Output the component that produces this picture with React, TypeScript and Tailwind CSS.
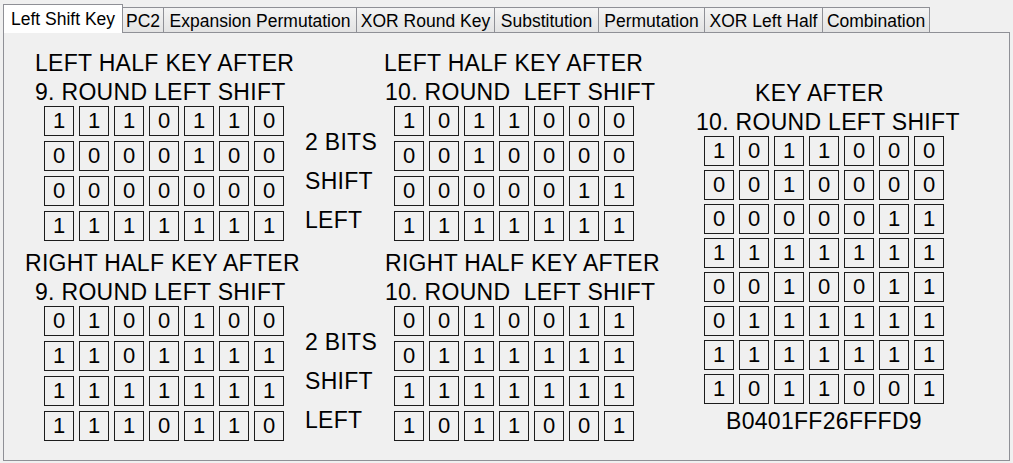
const tabs = [
  { label: 'Left Shift Key', w: 'w-[120px]', active: true },
  { label: 'PC2', w: 'w-[42px]' },
  { label: 'Expansion Permutation', w: 'w-[194px]' },
  { label: 'XOR Round Key', w: 'w-[139px]' },
  { label: 'Substitution', w: 'w-[105px]' },
  { label: 'Permutation', w: 'w-[107px]' },
  { label: 'XOR Left Half', w: 'w-[119px]' },
  { label: 'Combination', w: 'w-[108px]' },
];

const leftTop = ['1110110', '0000100', '0000000', '1111111'];
const midTop = ['1011000', '0010000', '0000011', '1111111'];
const leftBottom = ['0100100', '1101111', '1111111', '1110110'];
const midBottom = ['0010011', '0111111', '1111111', '1011001'];
const combined = [...midTop, ...midBottom];

const Grid = ({ rows, tight = false }: { rows: string[]; tight?: boolean }) => (
  <div className={tight ? 'flex flex-col gap-[4px]' : 'flex flex-col gap-[5px]'}>
    {rows.map((row, r) => (
      <div key={r} className="flex gap-[5px]">
        {row.split('').map((bit, c) => (
          <div
            key={c}
            className="w-[30px] h-[30px] border border-[#1c1c1c] flex items-center justify-center text-[22px] tracking-normal leading-none"
          >
            {bit}
          </div>
        ))}
      </div>
    ))}
  </div>
);

const ShiftLabels = () => (
  <div className="w-[79px] mt-[74px] flex flex-col leading-[39px]">
    <span>2 BITS</span>
    <span>SHIFT</span>
    <span>LEFT</span>
  </div>
);

const Block = ({ title, second, rows, titlePad, secondPad, gridPad, w }: {
  title: string; second: string; rows: string[];
  titlePad: string; secondPad: string; gridPad: string; w: string;
}) => (
  <div className={`${w} flex flex-col`}>
    <div className={`${titlePad} leading-[29px] whitespace-pre`}>{title}</div>
    <div className={`${secondPad} leading-[28px] whitespace-pre`}>{second}</div>
    <div className={gridPad}>
      <Grid rows={rows} />
    </div>
  </div>
);

export default function App() {
  return (
    <div
      className="w-[1013px] h-[463px] bg-[#f0f0f0] overflow-hidden text-black"
      style={{ fontFamily: '"Liberation Sans", Arial, sans-serif' }}
    >
      <div className="flex items-end h-[32px] pl-[3px] text-[17.5px] leading-[20px]">
        {tabs.map((t, i) => (
          <div
            key={t.label}
            className={
              t.active
                ? `${t.w} h-[29px] -mb-px relative z-10 bg-white border border-b-0 border-[#8f9096] flex justify-center pt-[4px]`
                : `${t.w} h-[25px] ${i > 0 ? '-ml-px' : ''} bg-linear-to-b from-[#f4f4f4] to-[#e3e3e3] border border-b-0 border-[#8f9096] flex justify-center pt-[3px]`
            }
          >
            {t.label}
          </div>
        ))}
      </div>

      <div className="ml-[3px] w-[1007px] h-[429px] border border-[#8f9096] bg-[#f0f0f0] flex text-[23px] tracking-[0.3px]">
        <div className="flex flex-col pt-[16px]">
          <div className="flex">
            <Block
              w="w-[301px]"
              title="LEFT HALF KEY AFTER"
              second="9. ROUND LEFT SHIFT"
              rows={leftTop}
              titlePad="pl-[31px]"
              secondPad="pl-[31px]"
              gridPad="pl-[40px]"
            />
            <ShiftLabels />
            <Block
              w="w-[306px]"
              title="LEFT HALF KEY AFTER"
              second="10. ROUND  LEFT SHIFT"
              rows={midTop}
              titlePad="pl-0"
              secondPad="pl-[1px]"
              gridPad="pl-[10px]"
            />
          </div>
          <div className="flex mt-[8px]">
            <Block
              w="w-[301px]"
              title="RIGHT HALF KEY AFTER"
              second="9. ROUND LEFT SHIFT"
              rows={leftBottom}
              titlePad="pl-[21px]"
              secondPad="pl-[31px]"
              gridPad="pl-[40px]"
            />
            <ShiftLabels />
            <Block
              w="w-[306px]"
              title="RIGHT HALF KEY AFTER"
              second="10. ROUND  LEFT SHIFT"
              rows={midBottom}
              titlePad="pl-[1px]"
              secondPad="pl-[1px]"
              gridPad="pl-[10px]"
            />
          </div>
        </div>

        <div className="flex flex-col pt-[45px]">
          <div className="pl-[65px] leading-[30px]">KEY AFTER</div>
          <div className="pl-[6px] leading-[28px]">10. ROUND LEFT SHIFT</div>
          <div className="pl-[14px]">
            <Grid rows={combined} tight />
          </div>
          <div className="pl-[36px] mt-[3px] leading-[29px]">B0401FF26FFFD9</div>
        </div>
      </div>
    </div>
  );
}
